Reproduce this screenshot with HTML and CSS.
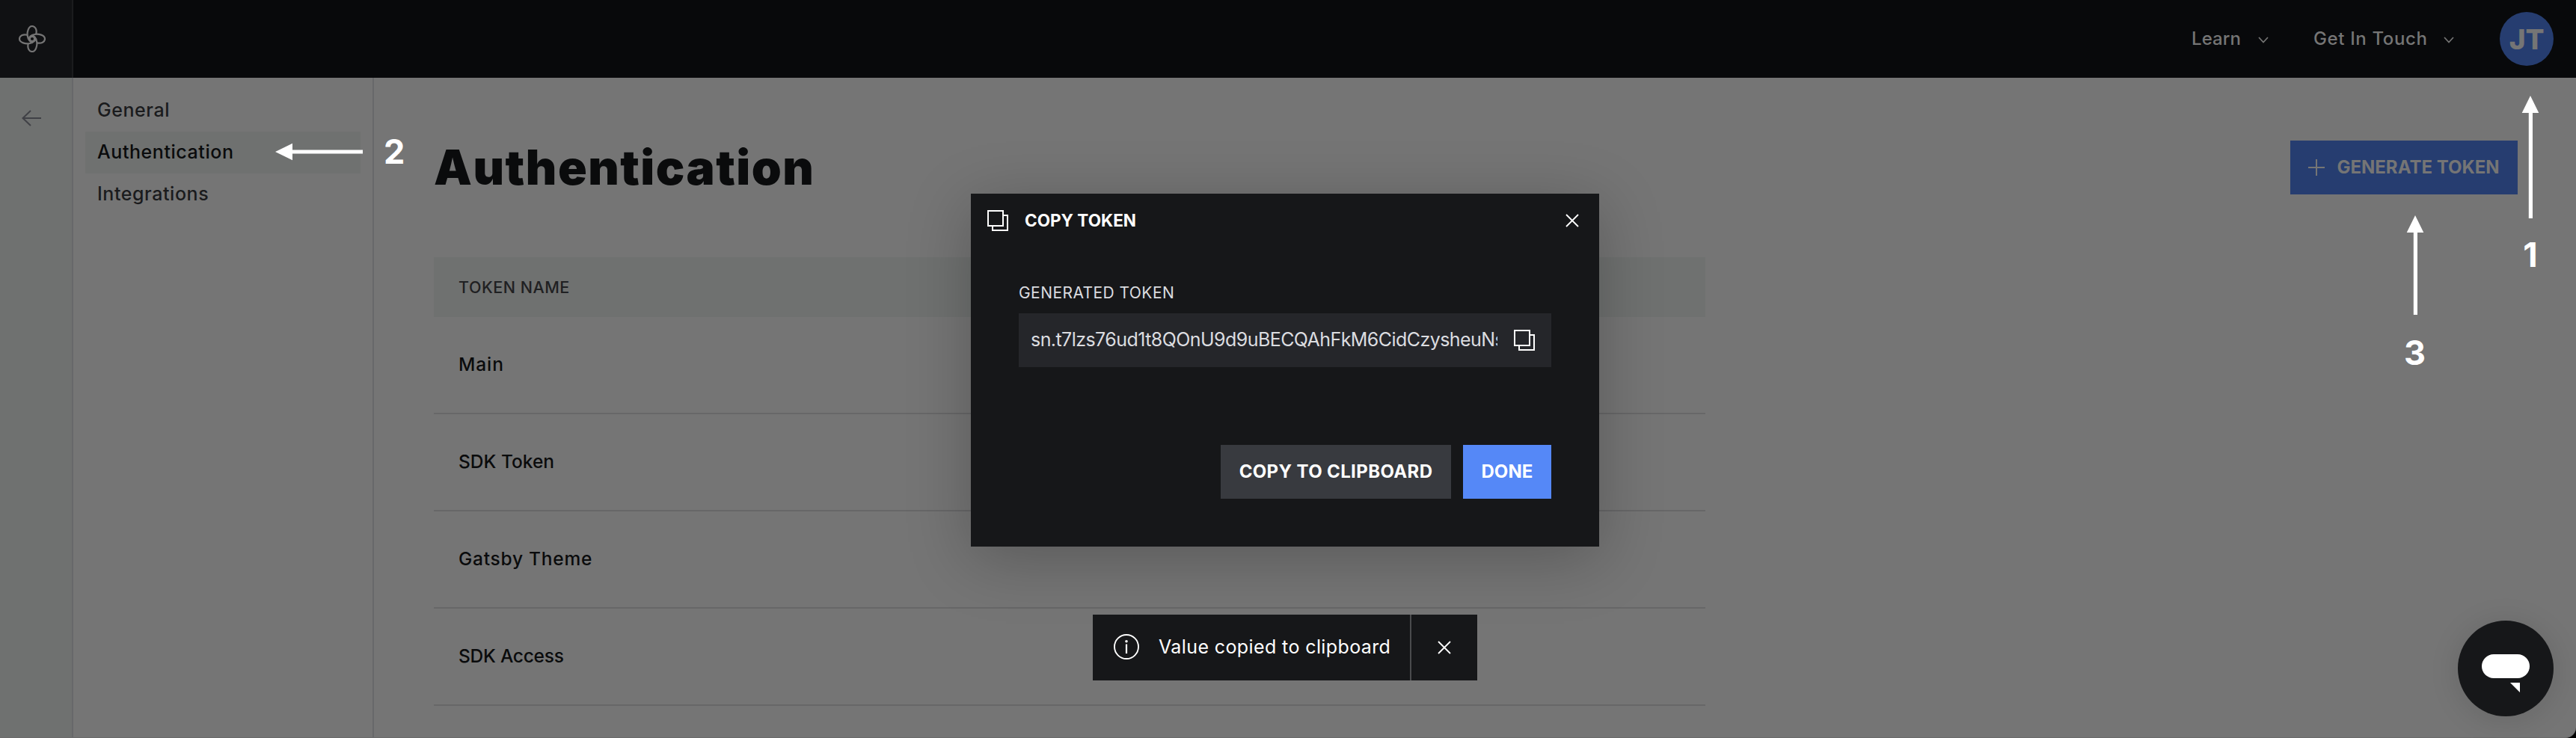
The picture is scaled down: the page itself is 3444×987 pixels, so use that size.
FILE: index.html
```html
<!DOCTYPE html>
<html lang="en">
<head>
<meta charset="utf-8">
<title>Authentication</title>
<link rel="stylesheet" href="styles.css">
</head>
<body>
<svg width="0" height="0" class="sprite" aria-hidden="true">
  <symbol id="copy" viewBox="0 0 28 28"><path d="M1 1h20v20H1zM7 22v5h20V7h-5" fill="none" stroke="currentColor" stroke-width="2"/></symbol>
  <symbol id="close" viewBox="0 0 18 18"><path d="M1 1l16 16M17 1L1 17" fill="none" stroke="currentColor" stroke-width="1.8"/></symbol>
  <symbol id="chevron" viewBox="0 0 14 9"><path d="M1 1l6 6.5L13 1" fill="none" stroke="currentColor" stroke-width="1.7"/></symbol>
</svg>

<div class="shell">
  <header class="topbar">
    <a class="logo">
      <svg width="36" height="36" viewBox="-18 -18 36 36">
        <g fill="none" stroke="currentColor" stroke-width="2.2">
          <path id="p" d="M5.200 -6.200C6.800 -12.300 4 -17 0 -17C-5 -17 -7.300 -8.500 -6 -3C-5.200 .8 -3 4 .6 5.300"/>
          <use href="#p" transform="rotate(90)"/>
          <use href="#p" transform="rotate(180)"/>
          <use href="#p" transform="rotate(270)"/>
          <circle r="3.200"/>
        </g>
      </svg>
    </a>
    <nav class="topnav">
      <a class="toplink learn">Learn<svg width="14" height="9"><use href="#chevron"/></svg></a>
      <a class="toplink touch">Get In Touch<svg width="14" height="9"><use href="#chevron"/></svg></a>
      <span class="avatar">JT</span>
    </nav>
  </header>

  <div class="body">
    <aside class="rail">
      <svg width="26" height="22" viewBox="0 0 26 22"><path d="M26 11H1.500M12 1L1.500 11L12 21" fill="none" stroke="currentColor" stroke-width="2"/></svg>
    </aside>
    <nav class="subnav">
      <a class="subnav-item">General</a>
      <a class="subnav-item active">Authentication</a>
      <a class="subnav-item">Integrations</a>
    </nav>
    <main class="content">
      <div class="heading">
        <h1>Authentication</h1>
        <button class="btn generate"><svg width="22" height="22" viewBox="0 0 22 22"><path d="M11 0v22M0 11h22" stroke="currentColor" stroke-width="2"/></svg>GENERATE TOKEN</button>
      </div>
      <div class="table">
        <div class="thead">TOKEN NAME</div>
        <div class="row main">Main</div>
        <div class="row token">SDK Token</div>
        <div class="row theme">Gatsby Theme</div>
        <div class="row access">SDK Access</div>
      </div>
    </main>
  </div>
</div>

<div class="overlay">
  <section class="modal">
    <header class="modal-head">
      <svg width="28" height="28"><use href="#copy"/></svg>
      <h2>COPY TOKEN</h2>
      <svg class="modal-close" width="18" height="18"><use href="#close"/></svg>
    </header>
    <div class="modal-body">
      <label class="label">GENERATED TOKEN</label>
      <div class="field">
        <span class="field-text">sn.t7lzs76ud1t8QOnU9d9uBECQAhFkM6CidCzysheuNs</span>
        <svg width="28" height="28"><use href="#copy"/></svg>
      </div>
      <div class="actions">
        <button class="btn secondary">COPY TO CLIPBOARD</button>
        <button class="btn primary">DONE</button>
      </div>
    </div>
  </section>
  <div class="toast">
    <div class="toast-main">
      <svg width="34" height="34" viewBox="0 0 34 34"><circle cx="17" cy="17" r="16" fill="none" stroke="#fff" stroke-width="1.900"/><path d="M17 13.500V26" stroke="#fff" stroke-width="2.200"/><circle cx="17" cy="9.800" r="1.800" fill="#fff"/></svg>
      <span>Value copied to clipboard</span>
    </div>
    <div class="toast-close"><svg width="18" height="18"><use href="#close"/></svg></div>
  </div>
</div>

<div class="callout c1">
  <svg width="24" height="164" viewBox="0 0 24 164"><path d="M12 0L23.300 23H15v141H9.800V23H.7z" fill="#fff"/></svg>
  <b>1</b>
</div>
<div class="callout c2">
  <svg width="117" height="24" viewBox="0 0 117 24"><path d="M0 12L23 .7V9.500H117v5H23v8.800z" fill="#fff"/></svg>
  <b>2</b>
</div>
<div class="callout c3">
  <svg width="24" height="133" viewBox="0 0 24 133"><path d="M12 0L23.300 23H15v110H9.800V23H.7z" fill="#fff"/></svg>
  <b>3</b>
</div>

<div class="chat">
  <svg width="64" height="52" viewBox="0 0 64 52"><rect width="64" height="32" rx="16" fill="#fff"/><path d="M38 38h13v13z" fill="#fff"/></svg>
</div>
</body>
</html>
```
FILE: styles.css
```css
* { box-sizing: border-box; }

body {
  margin: 0;
  background: #000;
  font-family: Inter, "Open Sans", sans-serif;
  font-size: 24px;
  font-weight: 500;
  overflow: hidden;
}

svg { display: block; flex: none; }
.sprite { position: absolute; }

.shell {
  display: flex;
  flex-direction: column;
  height: 987px;
  background: #757575;
  border-bottom: 1px solid #6b6b6b;
  border-bottom-right-radius: 14px;
  overflow: hidden;
}

/* Top bar */
.topbar {
  display: flex;
  justify-content: space-between;
  height: 104px;
  flex: none;
  background: #08090b;
  color: #757575;
}
.logo {
  display: flex;
  align-items: center;
  width: 98px;
  padding-left: 25px;
  background: #101113;
  border-right: 2px solid #1b1c1e;
}
.topnav {
  display: flex;
  align-items: center;
  padding-right: 30px;
}
.toplink {
  display: flex;
  align-items: center;
  justify-content: space-between;
  line-height: 28px;
  padding-bottom: 1px;
}
.toplink svg { margin-top: 4px; }
.learn { width: 103px; margin-right: 60px; letter-spacing: .08px; }
.touch { width: 188px; margin-right: 61px; letter-spacing: .63px; }
.avatar {
  display: flex;
  align-items: center;
  justify-content: center;
  width: 72px;
  height: 72px;
  border-radius: 50%;
  background: #263d70;
  font-size: 37px;
  font-weight: 800;
  letter-spacing: -.3px;
}

/* Page columns */
.body { display: flex; flex: 1; min-height: 0; }
.rail {
  width: 98px;
  padding: 43px 0 0 29px;
  background: #6f7170;
  border-right: 2px solid #67686a;
  color: #404146;
}
.subnav {
  width: 402px;
  padding: 16px 16px 0;
  border-right: 2px solid #67686a;
}
.subnav-item {
  display: block;
  height: 56px;
  padding-left: 16px;
  font-size: 25px;
  line-height: 54px;
  color: #1a1b1d;
  letter-spacing: .56px;
}
.subnav-item.active { background: #6f7170; color: #0a0b0c; }

.content { flex: 1; padding: 84px 78px 0 80px; }
.heading {
  display: flex;
  align-items: center;
  justify-content: space-between;
  height: 72px;
}
h1 {
  margin: 0;
  font-size: 64px;
  font-weight: 900;
  line-height: 70px;
  letter-spacing: 1.5px;
  color: #0a0b0c;
}

.btn {
  display: flex;
  align-items: center;
  justify-content: center;
  height: 72px;
  padding: 0;
  border: 0;
  font: 700 24px/30px Inter, "Open Sans", sans-serif;
  white-space: nowrap;
}
.generate {
  width: 304px;
  gap: 16px;
  background: #263d70;
  color: #757575;
}

.table { width: 1700px; margin-top: 84px; }
.thead {
  height: 80px;
  padding-left: 33px;
  background: #6f7170;
  font-size: 21.5px;
  line-height: 80px;
  letter-spacing: .51px;
  color: #1f2022;
}
.row {
  height: 130px;
  padding-left: 33px;
  border-bottom: 2px solid #676768;
  font-size: 24.5px;
  line-height: 127px;
  color: #0a0b0c;
}
.row.main { letter-spacing: .9px; }
.row.theme { letter-spacing: .75px; }
.row.access { letter-spacing: -.25px; }

/* Dialog and toast */
.overlay {
  position: absolute;
  inset: 0 8px 0 0;
  display: flex;
  flex-direction: column;
  align-items: center;
  padding-top: 259px;
}
.modal {
  width: 840px;
  height: 472px;
  background: #161719;
  color: #fff;
  box-shadow: 0 16px 80px rgba(0, 0, 0, .24);
}
.modal-head {
  display: flex;
  align-items: center;
  height: 72px;
  padding: 0 27px 0 22px;
}
h2 {
  margin: 0 0 0 22px;
  font-size: 22.5px;
  font-weight: 700;
  line-height: 30px;
}
.modal-close { margin-left: auto; }
.modal-body { padding: 44px 64px 0; }
.label {
  display: block;
  height: 44px;
  font-size: 21px;
  font-weight: 400;
  line-height: 34px;
  letter-spacing: .43px;
  color: #dcdde0;
}
.field {
  display: flex;
  align-items: center;
  justify-content: space-between;
  height: 72px;
  padding: 0 22px 0 16px;
  background: #25262a;
}
.field-text {
  width: 624px;
  overflow: hidden;
  padding-bottom: 2px;
  font-size: 25px;
  font-weight: 400;
  line-height: 36px;
  letter-spacing: -.56px;
  white-space: nowrap;
  color: #dcdde0;
}
.actions {
  display: flex;
  justify-content: flex-end;
  gap: 16px;
  margin-top: 104px;
}
.secondary { width: 308px; background: #383a3f; color: #fff; letter-spacing: .37px; }
.primary { width: 118px; background: #5588f7; color: #fff; letter-spacing: .1px; }

.toast {
  display: flex;
  width: 514px;
  height: 88px;
  margin-top: 91px;
  background: #161719;
  color: #fff;
  font-size: 25px;
  font-weight: 400;
  letter-spacing: .39px;
}
.toast-main {
  display: flex;
  align-items: center;
  gap: 26px;
  width: 426px;
  padding: 0 0 2px 28px;
  border-right: 2px solid #4a4b4d;
  white-space: nowrap;
}
.toast-close {
  display: flex;
  align-items: center;
  padding-left: 35px;
}

/* Numbered callouts pinned over the page */
.callout {
  position: absolute;
  display: flex;
  align-items: center;
  color: #fff;
}
.callout b { font-size: 45px; font-weight: 700; line-height: 54px; }
.c1, .c3 { flex-direction: column; }
.c1 { left: 3371px; top: 128px; gap: 22px; }
.c2 { left: 368px; top: 191px; gap: 28px; height: 24px; }
.c3 { left: 3214px; top: 288px; gap: 24px; }

.chat {
  position: absolute;
  right: 30px;
  bottom: 29px;
  display: flex;
  justify-content: center;
  width: 128px;
  height: 128px;
  padding-top: 45px;
  border-radius: 50%;
  background: #161719;
  box-shadow: 0 4px 40px rgba(0, 0, 0, .12);
}
```
